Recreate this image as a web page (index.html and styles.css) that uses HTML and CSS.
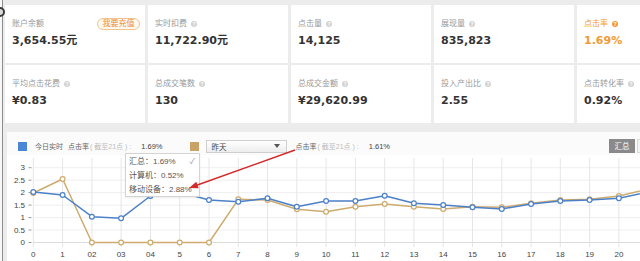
FILE: index.html
```html
<!DOCTYPE html>
<html lang="zh-CN">
<head>
<meta charset="utf-8">
<title>推广概况</title>
<link rel="stylesheet" href="styles.css">
</head>
<body>
<span class="edge-icon"></span>
<div class="page">
  <div class="stats">
    <div class="card">
      <div class="card-head"><span class="label">账户余额</span><a class="recharge">我要充值</a></div>
      <div class="value">3,654.55元</div>
    </div>
    <div class="card">
      <div class="card-head"><span class="label">实时扣费</span><i class="help">?</i></div>
      <div class="value">11,722.90元</div>
    </div>
    <div class="card">
      <div class="card-head"><span class="label">点击量</span><i class="help">?</i></div>
      <div class="value">14,125</div>
    </div>
    <div class="card">
      <div class="card-head"><span class="label">展现量</span><i class="help">?</i></div>
      <div class="value">835,823</div>
    </div>
    <div class="card card-hot">
      <div class="card-head"><span class="label">点击率</span><i class="help">?</i></div>
      <div class="value">1.69%</div>
    </div>
    <div class="card">
      <div class="card-head"><span class="label">平均点击花费</span><i class="help">?</i></div>
      <div class="value">¥0.83</div>
    </div>
    <div class="card">
      <div class="card-head"><span class="label">总成交笔数</span><i class="help">?</i></div>
      <div class="value">130</div>
    </div>
    <div class="card">
      <div class="card-head"><span class="label">总成交金额</span><i class="help">?</i></div>
      <div class="value">¥29,620.99</div>
    </div>
    <div class="card">
      <div class="card-head"><span class="label">投入产出比</span><i class="help">?</i></div>
      <div class="value">2.55</div>
    </div>
    <div class="card">
      <div class="card-head"><span class="label">点击转化率</span><i class="help">?</i></div>
      <div class="value">0.92%</div>
    </div>
  </div>

  <section class="chart-panel">
    <div class="legend">
      <span class="swatch swatch-blue"></span>
      <span class="lg-name">今日实时</span>
      <span class="lg-metric">点击率</span>
      <span class="lg-note">( 截至21点 ) :</span>
      <span class="lg-val">1.69%</span>
      <span class="swatch swatch-tan"></span>
      <div class="select"><span>昨天</span><i class="caret"></i></div>
      <span class="lg-metric lg-metric-2">点击率</span>
      <span class="lg-note">( 截至21点 ) :</span>
      <span class="lg-val">1.61%</span>
      <span class="spacer"></span>
      <span class="seg seg-active">汇总</span>
      <span class="seg seg-next"></span>
    </div>

    <svg class="plot" width="633" height="106" viewBox="7 155 633 106">
      <g class="grid-h">
        <line x1="33" y1="167.7" x2="640" y2="167.7"/>
        <line x1="33" y1="180.2" x2="640" y2="180.2"/>
        <line x1="33" y1="192.6" x2="640" y2="192.6"/>
        <line x1="33" y1="205.1" x2="640" y2="205.1"/>
        <line x1="33" y1="217.6" x2="640" y2="217.6"/>
        <line x1="33" y1="230.0" x2="640" y2="230.0"/>
      </g>
      <g class="grid-v">
        <line x1="33.3" y1="158" x2="33.3" y2="247"/>
        <line x1="62.6" y1="158" x2="62.6" y2="247"/>
        <line x1="91.9" y1="158" x2="91.9" y2="247"/>
        <line x1="121.1" y1="158" x2="121.1" y2="247"/>
        <line x1="150.4" y1="158" x2="150.4" y2="247"/>
        <line x1="179.7" y1="158" x2="179.7" y2="247"/>
        <line x1="209.0" y1="158" x2="209.0" y2="247"/>
        <line x1="238.3" y1="158" x2="238.3" y2="247"/>
        <line x1="267.5" y1="158" x2="267.5" y2="247"/>
        <line x1="296.8" y1="158" x2="296.8" y2="247"/>
        <line x1="326.1" y1="158" x2="326.1" y2="247"/>
        <line x1="355.4" y1="158" x2="355.4" y2="247"/>
        <line x1="384.7" y1="158" x2="384.7" y2="247"/>
        <line x1="413.9" y1="158" x2="413.9" y2="247"/>
        <line x1="443.2" y1="158" x2="443.2" y2="247"/>
        <line x1="472.5" y1="158" x2="472.5" y2="247"/>
        <line x1="501.8" y1="158" x2="501.8" y2="247"/>
        <line x1="531.1" y1="158" x2="531.1" y2="247"/>
        <line x1="560.3" y1="158" x2="560.3" y2="247"/>
        <line x1="589.6" y1="158" x2="589.6" y2="247"/>
        <line x1="618.9" y1="158" x2="618.9" y2="247"/>
      </g>
      <line class="axis" x1="33" y1="242.5" x2="640" y2="242.5"/>
      <g class="ticks">
        <line x1="28.5" y1="167.7" x2="31.5" y2="167.7"/>
        <line x1="28.5" y1="180.2" x2="31.5" y2="180.2"/>
        <line x1="28.5" y1="192.6" x2="31.5" y2="192.6"/>
        <line x1="28.5" y1="205.1" x2="31.5" y2="205.1"/>
        <line x1="28.5" y1="217.6" x2="31.5" y2="217.6"/>
        <line x1="28.5" y1="230.0" x2="31.5" y2="230.0"/>
        <line x1="28.5" y1="242.5" x2="31.5" y2="242.5"/>
      </g>
      <g class="ylab">
        <text x="25" y="167.7">3</text>
        <text x="25" y="180.2">2.5</text>
        <text x="25" y="192.6">2</text>
        <text x="25" y="205.1">1.5</text>
        <text x="25" y="217.6">1</text>
        <text x="25" y="230.0">0.5</text>
        <text x="25" y="242.5">0</text>
      </g>
      <g class="xlab">
        <text x="33.3" y="254">0</text>
        <text x="62.6" y="254">1</text>
        <text x="91.9" y="254">02</text>
        <text x="121.1" y="254">03</text>
        <text x="150.4" y="254">04</text>
        <text x="179.7" y="254">5</text>
        <text x="209.0" y="254">6</text>
        <text x="238.3" y="254">7</text>
        <text x="267.5" y="254">8</text>
        <text x="296.8" y="254">9</text>
        <text x="326.1" y="254">10</text>
        <text x="355.4" y="254">11</text>
        <text x="384.7" y="254">12</text>
        <text x="413.9" y="254">13</text>
        <text x="443.2" y="254">14</text>
        <text x="472.5" y="254">15</text>
        <text x="501.8" y="254">16</text>
        <text x="531.1" y="254">17</text>
        <text x="560.3" y="254">18</text>
        <text x="589.6" y="254">19</text>
        <text x="618.9" y="254">20</text>
      </g>

      <g class="series tan">
        <polyline points="33.3,193 62.6,179 91.9,242.5 121.1,242.5 150.4,242.5 179.7,242.5 209.0,242.5 238.3,199.3 267.5,200 296.8,209.3 326.1,211.7 355.4,206.7 384.7,204 413.9,206.7 443.2,209 472.5,206.7 501.8,207.3 531.1,203.3 560.3,200 589.6,199.3 618.9,196 648.2,189"/>
        <circle cx="33.3" cy="193" r="2.4"/><circle cx="62.6" cy="179" r="2.4"/>
        <circle cx="91.9" cy="242.5" r="2.4"/><circle cx="121.1" cy="242.5" r="2.4"/>
        <circle cx="150.4" cy="242.5" r="2.4"/><circle cx="179.7" cy="242.5" r="2.4"/>
        <circle cx="209.0" cy="242.5" r="2.4"/><circle cx="238.3" cy="199.3" r="2.4"/>
        <circle cx="267.5" cy="200" r="2.4"/><circle cx="296.8" cy="209.3" r="2.4"/>
        <circle cx="326.1" cy="211.7" r="2.4"/><circle cx="355.4" cy="206.7" r="2.4"/>
        <circle cx="384.7" cy="204" r="2.4"/><circle cx="413.9" cy="206.7" r="2.4"/>
        <circle cx="443.2" cy="209" r="2.4"/><circle cx="472.5" cy="206.7" r="2.4"/>
        <circle cx="501.8" cy="207.3" r="2.4"/><circle cx="531.1" cy="203.3" r="2.4"/>
        <circle cx="560.3" cy="200" r="2.4"/><circle cx="589.6" cy="199.3" r="2.4"/>
        <circle cx="618.9" cy="196" r="2.4"/>
      </g>
      <g class="series blue">
        <polyline points="33.3,192 62.6,195 91.9,216.7 121.1,218.3 150.4,196 179.7,192 209.0,200 238.3,201.7 267.5,198.3 296.8,206.7 326.1,201 355.4,201 384.7,195.7 413.9,203.3 443.2,205 472.5,207.3 501.8,209 531.1,204 560.3,201 589.6,200 618.9,198.3 648.2,192"/>
        <circle cx="33.3" cy="192" r="2.4"/><circle cx="62.6" cy="195" r="2.4"/>
        <circle cx="91.9" cy="216.7" r="2.4"/><circle cx="121.1" cy="218.3" r="2.4"/>
        <circle cx="150.4" cy="196" r="2.4"/><circle cx="179.7" cy="192" r="2.4"/>
        <circle cx="209.0" cy="200" r="2.4"/><circle cx="238.3" cy="201.7" r="2.4"/>
        <circle cx="267.5" cy="198.3" r="2.4"/><circle cx="296.8" cy="206.7" r="2.4"/>
        <circle cx="326.1" cy="201" r="2.4"/><circle cx="355.4" cy="201" r="2.4"/>
        <circle cx="384.7" cy="195.7" r="2.4"/><circle cx="413.9" cy="203.3" r="2.4"/>
        <circle cx="443.2" cy="205" r="2.4"/><circle cx="472.5" cy="207.3" r="2.4"/>
        <circle cx="501.8" cy="209" r="2.4"/><circle cx="531.1" cy="204" r="2.4"/>
        <circle cx="560.3" cy="201" r="2.4"/><circle cx="589.6" cy="200" r="2.4"/>
        <circle cx="618.9" cy="198.3" r="2.4"/>
      </g>
    </svg>

    <ul class="menu">
      <li><span>汇总：1.69%</span><span class="check">✓</span></li>
      <li><span>计算机：0.52%</span></li>
      <li><span>移动设备：2.88%</span></li>
    </ul>

    <svg class="arrow" width="300" height="70" viewBox="0 0 300 70">
      <line x1="288" y1="18" x2="189" y2="53.5"/>
      <polygon points="182,56 191.7,56.3 189.3,49.7"/>
    </svg>
  </section>
</div>
</body>
</html>
```

FILE: styles.css
```css
* {
  box-sizing: border-box;
  margin: 0;
  padding: 0;
}

html,
body {
  width: 640px;
  height: 261px;
  overflow: hidden;
  background: #f7f7f7;
}

body {
  position: relative;
  font-family: "Liberation Sans", "Noto Sans CJK SC", sans-serif;
  font-size: 8px;
  color: #333;
}

.edge-icon {
  position: absolute;
  left: -5px;
  top: 7px;
  width: 10px;
  height: 10px;
  border: 2px solid #3a3a3a;
  border-radius: 50%;
  background: #dcdcdc;
  z-index: 3;
}

.page {
  margin-left: 2px;
  border-left: 1px solid #8d8d8d;
  background: #ececec;
  padding: 5px 0 0 2px;
  height: 261px;
}

/* ---------- stat cards ---------- */
.stats {
  display: grid;
  grid-template-columns: repeat(5, 140px);
  column-gap: 3px;
  row-gap: 2px;
}

.card {
  background: #fff;
  height: 58px;
  padding: 13px 5px 0 7px;
}

.card-head {
  display: flex;
  align-items: center;
  gap: 4px;
  height: 12px;
}

.label {
  color: #999;
  font-size: 8px;
  line-height: 12px;
  white-space: nowrap;
}

.help {
  display: inline-flex;
  align-items: center;
  justify-content: center;
  width: 6px;
  height: 6px;
  border-radius: 50%;
  background: #d2d2d2;
  color: #fff;
  font-style: normal;
  font-weight: bold;
  font-size: 5px;
  line-height: 6px;
}

.recharge {
  margin-left: auto;
  width: 43px;
  height: 12px;
  border: 1px solid #f0c48c;
  border-radius: 6px;
  background: #fff8ef;
  color: #ec8d3c;
  font-size: 8px;
  line-height: 10px;
  text-align: center;
}

.value {
  margin-top: 4px;
  font-family: "DejaVu Sans", "Noto Sans CJK SC", sans-serif;
  font-weight: bold;
  font-size: 11px;
  line-height: 14px;
  color: #333;
  white-space: nowrap;
}

.card-hot .label,
.card-hot .value {
  color: #f29a35;
}

.card-hot .help {
  background: #f29a35;
}

/* ---------- chart panel ---------- */
.chart-panel {
  position: relative;
  margin: 9px 0 0 2px;
  width: 660px;
  height: 140px;
  background: #fff;
}

.legend {
  display: flex;
  align-items: center;
  height: 23px;
  padding: 7px 2px 2px 11px;
  background: #fbfbfb;
  white-space: nowrap;
  font-size: 7px;
}

.swatch {
  width: 9px;
  height: 9px;
  flex: none;
}

.swatch-blue {
  background: #4a86d6;
}

.swatch-tan {
  background: #c9a365;
  margin-left: 27px;
}

.lg-name {
  margin-left: 8px;
  color: #666;
}

.lg-metric {
  margin-left: 5px;
  color: #666;
}

.lg-metric-2 {
  margin-left: 9px;
}

.lg-note {
  margin-left: 1px;
  color: #bbb;
}

.lg-val {
  margin-left: 10px;
  color: #444;
  font-size: 7.5px;
}

.select {
  display: flex;
  align-items: center;
  justify-content: space-between;
  width: 81px;
  height: 13px;
  margin-left: 7px;
  padding: 0 6px 0 5px;
  border: 1px solid #cfcfcf;
  background: linear-gradient(#ffffff, #ededed);
  color: #444;
  font-size: 7.5px;
}

.caret {
  width: 0;
  height: 0;
  border-left: 3px solid transparent;
  border-right: 3px solid transparent;
  border-top: 4px solid #555;
}

.spacer {
  flex: 1;
}

.seg {
  width: 26px;
  height: 14px;
  line-height: 14px;
  text-align: center;
  color: #666;
  border: 1px solid #d8d8d8;
  background: #f4f4f4;
  margin-left: 2px;
  font-size: 7.5px;
}

.seg-next {
  width: 28px;
}

.seg-active {
  background: #8a8a8a;
  border-color: #8a8a8a;
  color: #fff;
}

.plot {
  display: block;
}

.grid-h line {
  stroke: #efefef;
  stroke-width: 1;
}

.grid-v line {
  stroke: #e6e6e6;
  stroke-width: 1;
}

.axis {
  stroke: #dcdcdc;
  stroke-width: 1;
}

.ticks line {
  stroke: #999;
  stroke-width: 1;
}

.ylab text,
.xlab text {
  font-family: "Liberation Sans", sans-serif;
  font-size: 8px;
  fill: #444;
  dominant-baseline: central;
}

.ylab text {
  text-anchor: end;
}

.xlab text {
  text-anchor: middle;
}

.series polyline {
  fill: none;
  stroke-width: 1.5;
  stroke-linejoin: round;
}

.series circle {
  fill: #fff;
  stroke-width: 1.2;
}

.blue polyline,
.blue circle {
  stroke: #4c80c8;
}

.tan polyline,
.tan circle {
  stroke: #cdab6e;
}

/* dropdown overlay */
.menu {
  position: absolute;
  left: 118px;
  top: 21px;
  width: 75px;
  height: 44px;
  list-style: none;
  padding: 1px 0 0 3px;
  background: #fff;
  border: 1px solid #d4d4d4;
  box-shadow: 0 1px 2px rgba(0, 0, 0, 0.08);
}

.menu li {
  display: flex;
  justify-content: space-between;
  height: 14px;
  line-height: 14px;
  color: #555;
  font-size: 8px;
  padding-right: 4px;
  white-space: nowrap;
}

.check {
  color: #999;
  font-size: 8px;
}

.arrow {
  position: absolute;
  left: 0;
  top: 0;
  overflow: visible;
}

.arrow line {
  stroke: #d42a2a;
  stroke-width: 1.5;
}

.arrow polygon {
  fill: #d42a2a;
}
```
